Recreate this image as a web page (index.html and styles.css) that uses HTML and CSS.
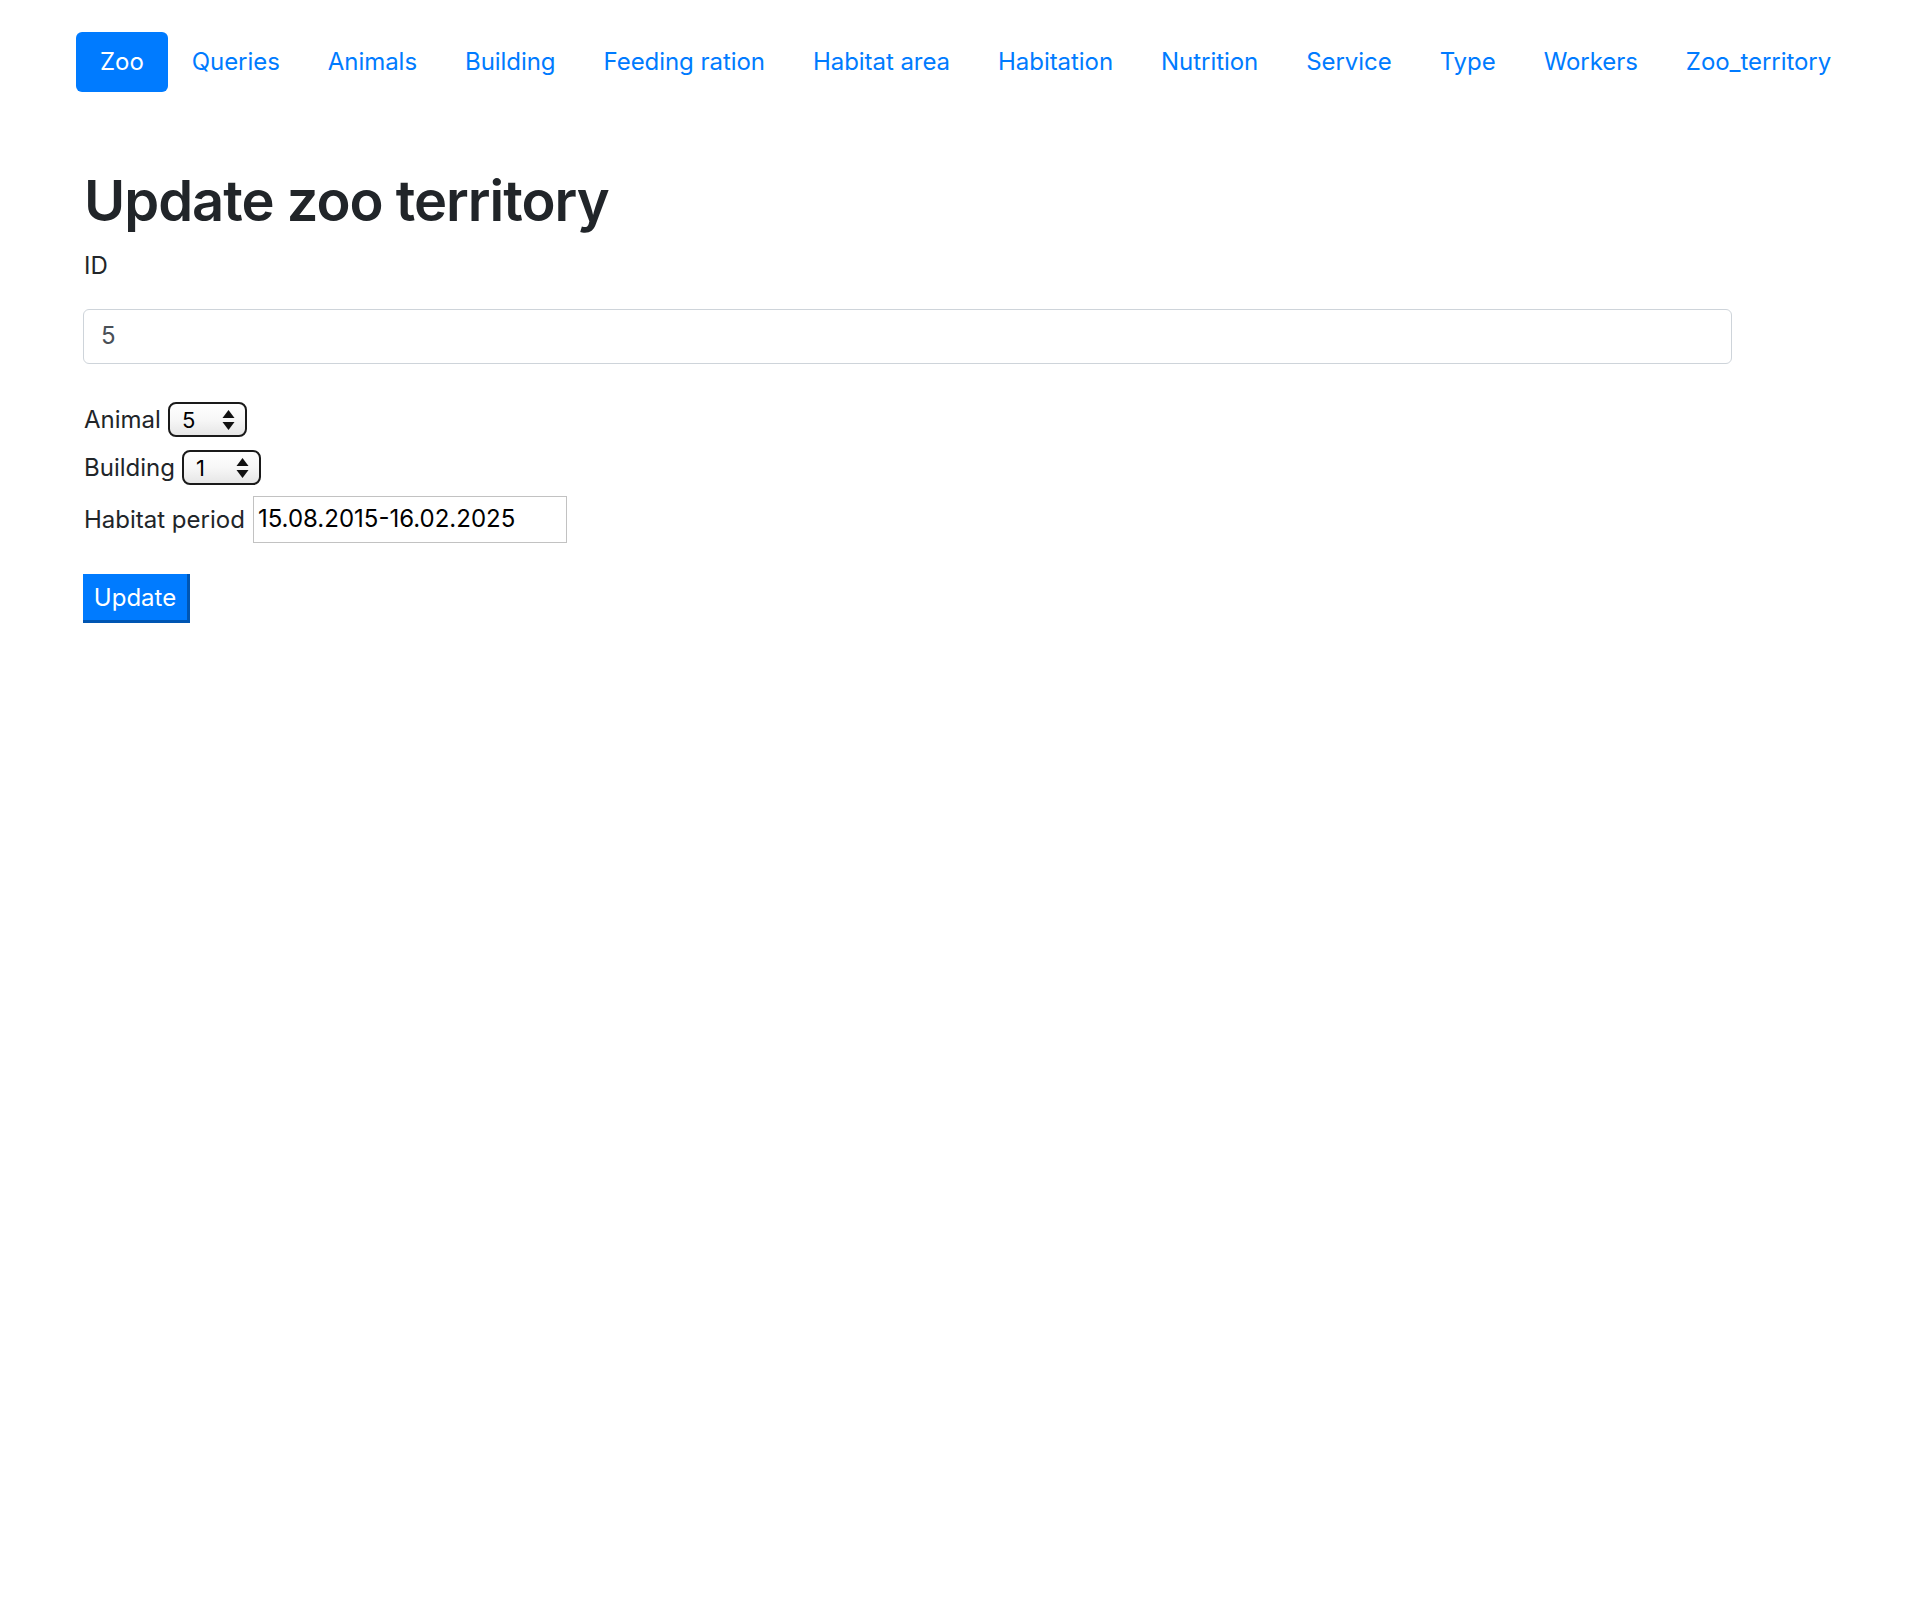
FILE: index.html
```html
<!DOCTYPE html>
<html lang="en">
<head>
<meta charset="utf-8">
<title>Update zoo territory</title>
<link rel="stylesheet" href="styles.css">
</head>
<body>
<nav class="nav">
  <a class="nav-link active" href="#">Zoo</a>
  <a class="nav-link" href="#">Queries</a>
  <a class="nav-link" href="#">Animals</a>
  <a class="nav-link" href="#">Building</a>
  <a class="nav-link" href="#">Feeding ration</a>
  <a class="nav-link" href="#">Habitat area</a>
  <a class="nav-link" href="#">Habitation</a>
  <a class="nav-link" href="#">Nutrition</a>
  <a class="nav-link" href="#">Service</a>
  <a class="nav-link" href="#">Type</a>
  <a class="nav-link" href="#">Workers</a>
  <a class="nav-link" href="#">Zoo_territory</a>
</nav>
<main class="content">
  <h1 class="title">Update zoo territory</h1>
  <label class="id-label">ID</label>
  <div class="form-control">5</div>
  <div class="row row-animal">
    <span class="lbl">Animal</span>
    <span class="select sel-animal"><span class="sel-val">5</span><svg class="arrows" width="13" height="20" viewBox="0 0 13 20"><path d="M6.5 0 L12.5 8 L0.5 8 Z M6.5 20 L12.5 12 L0.5 12 Z" fill="#111"/></svg></span>
  </div>
  <div class="row row-building">
    <span class="lbl">Building</span>
    <span class="select sel-building"><span class="sel-val">1</span><svg class="arrows" width="13" height="20" viewBox="0 0 13 20"><path d="M6.5 0 L12.5 8 L0.5 8 Z M6.5 20 L12.5 12 L0.5 12 Z" fill="#111"/></svg></span>
  </div>
  <div class="row row-period">
    <span class="lbl">Habitat period</span>
    <span class="text-input">15.08.2015-16.02.2025</span>
  </div>
  <div class="btn-row">
    <button class="btn" type="button">Update</button>
  </div>
</main>
</body>
</html>
```

FILE: styles.css
```css
html, body {
  margin: 0;
  padding: 0;
  background: #fff;
}
body {
  font-family: Inter, "Noto Sans", Roboto, "Liberation Sans", sans-serif;
  font-size: 24px;
  line-height: 1.5;
  color: #212529;
}
.nav {
  display: flex;
  padding: 32px 0 0 76px;
}
.nav-link {
  display: block;
  padding: 12px 24px;
  line-height: 36px;
  color: #007bff;
  text-decoration: none;
  border-radius: 6px;
  letter-spacing: -0.05px;
}
.nav-link.active {
  background: #007bff;
  color: #fff;
}
.content {
  display: flex;
  flex-direction: column;
  align-items: flex-start;
  padding-left: 84px;
}
.title {
  margin: 73px 0 11px 0;
  font-size: 56px;
  font-weight: 600;
  line-height: 72px;
  letter-spacing: -1px;
  color: #212529;
}
.id-label {
  line-height: 36px;
  margin-bottom: 25px;
}
.form-control {
  box-sizing: border-box;
  width: 1649px;
  height: 55px;
  margin-left: -1px;
  padding: 0 17px;
  border: 1.5px solid #ced4da;
  border-radius: 6px;
  color: #495057;
  line-height: 52px;
}
.row {
  display: flex;
  align-items: center;
  gap: 7px;
}
.row-animal { margin-top: 38px; height: 35px; }
.row-building { margin-top: 13px; height: 35px; }
.row-period { margin-top: 11px; height: 47px; gap: 8px; }
.lbl {
  line-height: 36px;
}
.select {
  box-sizing: border-box;
  display: flex;
  align-items: center;
  justify-content: space-between;
  height: 35px;
  width: 79px;
  padding: 0 10px 0 12px;
  border: 2px solid #1a1a1a;
  border-radius: 8px;
  background: linear-gradient(#ffffff 0%, #f7f7f7 50%, #e6e6e6 100%);
  font-size: 22px;
  line-height: 1;
  color: #000;
}
.arrows {
  display: block;
}
.text-input {
  box-sizing: border-box;
  width: 314px;
  height: 47px;
  padding: 0 4px;
  border: 1.5px solid #c2c2c2;
  color: #000;
  line-height: 44px;
  font-size: 24px;
}
.btn-row {
  margin-top: 31px;
}
.btn {
  box-sizing: border-box;
  width: 107px;
  height: 49px;
  margin-left: -1px;
  padding: 0;
  background: #007bff;
  color: #fff;
  font-family: inherit;
  font-size: 24px;
  border: 0;
  border-right: 3px solid #0056b3;
  border-bottom: 3px solid #0056b3;
  border-radius: 0;
  cursor: pointer;
}
```
